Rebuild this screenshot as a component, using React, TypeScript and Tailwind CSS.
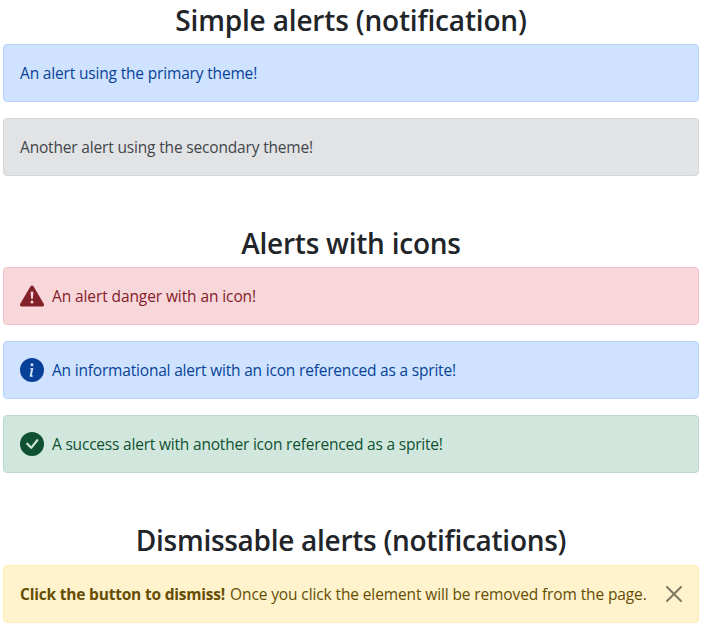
import React, { useState } from "react";
import { BsExclamationTriangleFill, BsInfoCircleFill, BsCheckCircleFill } from "react-icons/bs";

type AlertProps = { className: string; icon?: React.ReactNode; children: React.ReactNode };

function Alert({ className, icon, children }: AlertProps) {
  return (
    <div role="alert" className={`flex h-[58px] items-center rounded border px-4 text-[15.5px] leading-6 whitespace-nowrap ${className}`}>
      {icon && <span className="mr-2 shrink-0">{icon}</span>}
      {children}
    </div>
  );
}

function Heading({ className, children }: { className: string; children: React.ReactNode }) {
  return <h3 className={`text-center text-[28px] leading-[34px] font-semibold text-[#212529] ${className}`}>{children}</h3>;
}

export default function App() {
  const [open, setOpen] = useState(true);
  return (
    <main className="w-[702px] bg-white px-[3px] pt-[3px] font-['Open_Sans',sans-serif]">
      <section>
        <Heading className="mb-[7px] tracking-[-0.17px]">Simple alerts (notification)</Heading>
        <div className="flex flex-col gap-4">
          <Alert className="border-[#b6d4fe] bg-[#cfe2ff] text-[#084298]">
            <span className="tracking-[-0.17px]">An alert using the primary theme!</span>
          </Alert>
          <Alert className="border-[#d3d6d8] bg-[#e2e3e5] text-[#41464b]">
            <span className="tracking-[-0.17px]">Another alert using the secondary theme!</span>
          </Alert>
        </div>
      </section>
      <section className="mt-[50px]">
        <Heading className="mb-[7px] tracking-[-0.24px]">Alerts with icons</Heading>
        <div className="flex flex-col gap-4">
          <Alert className="border-[#f5c2c7] bg-[#f8d7da] text-[#842029]" icon={<BsExclamationTriangleFill size={24} />}>
            <span className="tracking-[-0.1px]">An alert danger with an icon!</span>
          </Alert>
          <Alert className="border-[#b6d4fe] bg-[#cfe2ff] text-[#084298]" icon={<BsInfoCircleFill size={24} />}>
            <span className="tracking-[-0.19px]">An informational alert with an icon referenced as a sprite!</span>
          </Alert>
          <Alert className="border-[#badbcc] bg-[#d1e7dd] text-[#0f5132]" icon={<BsCheckCircleFill size={24} />}>
            <span className="tracking-[-0.2px]">A success alert with another icon referenced as a sprite!</span>
          </Alert>
        </div>
      </section>
      <section className="mt-[50px]">
        <Heading className="mb-2 tracking-[-0.28px]">Dismissable alerts (notifications)</Heading>
        {open && (
          <Alert className="border-[#ffecb5] bg-[#fff3cd] text-[#664d03]">
            <strong className="mr-[5px] font-bold tracking-[-0.2px]">Click the button to dismiss!</strong>
            <span className="tracking-[-0.12px]">Once you click the element will be removed from the page.</span>
            <button type="button" aria-label="Close" onClick={() => setOpen(false)} className="ml-auto text-black opacity-50">
              <svg width="16" height="16" viewBox="0 0 16 16" fill="currentColor">
                <path d="M.293.293a1 1 0 011.414 0L8 6.586 14.293.293a1 1 0 111.414 1.414L9.414 8l6.293 6.293a1 1 0 01-1.414 1.414L8 9.414l-6.293 6.293a1 1 0 01-1.414-1.414L6.586 8 .293 1.707a1 1 0 010-1.414z" />
              </svg>
            </button>
          </Alert>
        )}
      </section>
    </main>
  );
}
